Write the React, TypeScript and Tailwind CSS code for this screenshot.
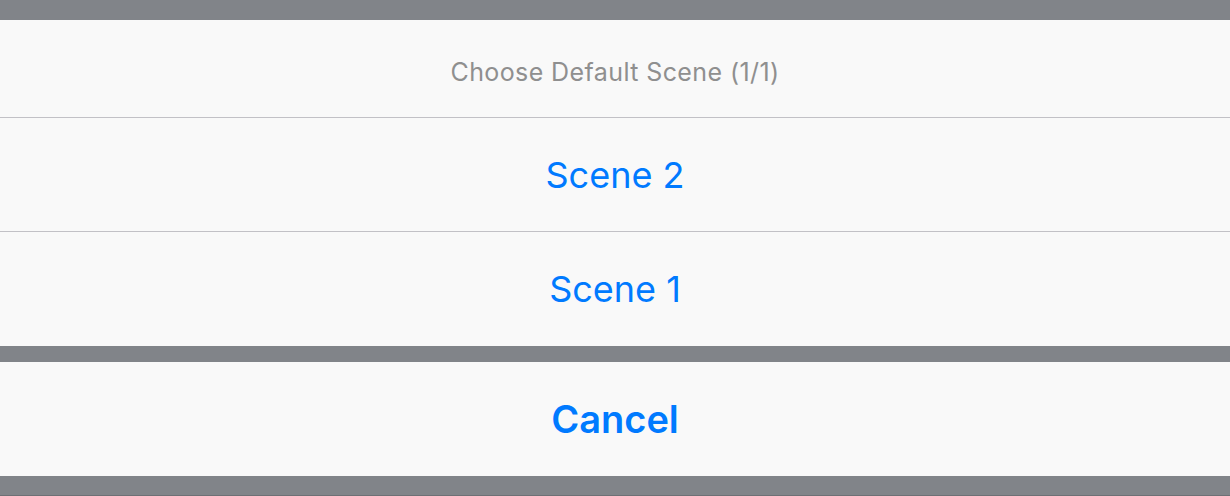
export default function App() {
  const font = { fontFamily: "Inter, 'Noto Sans', sans-serif" };
  return (
    <div className="flex h-[496px] w-[1230px] flex-col bg-[#818489]" style={font}>
      <div className="h-[20px]" />
      <div className="flex flex-col bg-[#f9f9f9]">
        <div className="flex h-[98px] items-center justify-center border-b border-[#c2c1c6] pt-[8px] text-[25px] tracking-[0.4px] text-[#8f8f8f]">
          Choose Default Scene (1/1)
        </div>
        <button className="flex h-[114px] items-center justify-center border-b border-[#c2c1c6] text-[36px] text-[#007aff]">
          Scene 2
        </button>
        <button className="flex h-[114px] items-center justify-center text-[36px] text-[#007aff]">
          Scene 1
        </button>
      </div>
      <div className="h-[16px]" />
      <button className="flex h-[114px] items-center justify-center bg-[#f9f9f9] text-[38px] font-semibold text-[#007aff]">
        Cancel
      </button>
      <div className="flex-1 border-b border-[#6d7075]" />
    </div>
  );
}
